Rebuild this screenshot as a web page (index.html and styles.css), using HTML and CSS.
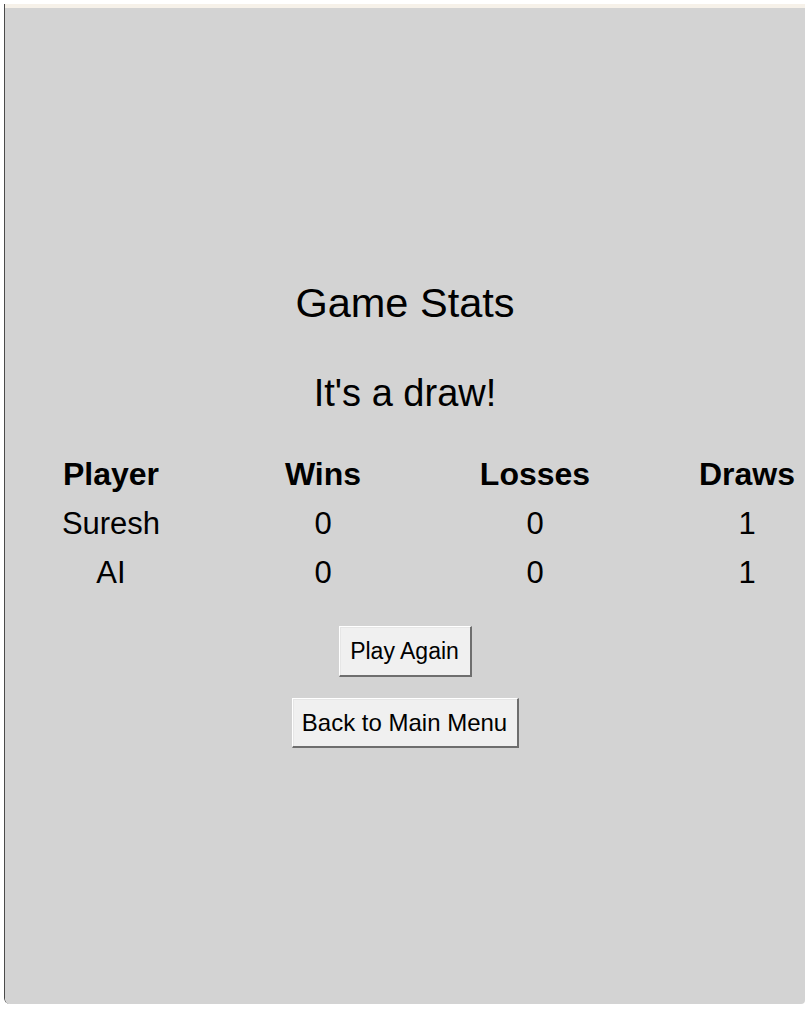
FILE: index.html
```html
<!DOCTYPE html>
<html>
<head>
<meta charset="utf-8">
<title>Game Stats</title>
<link rel="stylesheet" href="styles.css">
</head>
<body>
<div class="window">
  <div class="titlestrip"></div>
  <div class="panel">
    <h1 class="title">Game Stats</h1>
    <p class="result">It's a draw!</p>
    <div class="stats">
      <div class="cell head">Player</div>
      <div class="cell head">Wins</div>
      <div class="cell head">Losses</div>
      <div class="cell head">Draws</div>
      <div class="cell">Suresh</div>
      <div class="cell">0</div>
      <div class="cell">0</div>
      <div class="cell">1</div>
      <div class="cell">AI</div>
      <div class="cell">0</div>
      <div class="cell">0</div>
      <div class="cell">1</div>
    </div>
    <div class="buttons">
      <button class="btn btn-play">Play Again</button>
      <button class="btn btn-menu">Back to Main Menu</button>
    </div>
  </div>
</div>
</body>
</html>
```
FILE: styles.css
```css
html, body {
  margin: 0;
  padding: 0;
  background: #ffffff;
}
body {
  font-family: "Liberation Sans", Arial, sans-serif;
  color: #000;
}
.window {
  margin: 4px 0 0 4px;
  width: 801px;
  height: 1000px;
  display: flex;
  flex-direction: column;
  border-left: 1px solid #4a4a4a;
  border-bottom-left-radius: 6px;
  border-bottom-right-radius: 4px;
  overflow: hidden;
  box-sizing: border-box;
}
.titlestrip {
  height: 4px;
  background: #f6f1e9;
  flex: none;
}
.panel {
  flex: 1;
  background: #d3d3d3;
  display: flex;
  flex-direction: column;
  align-items: center;
  overflow: hidden;
}
.title {
  margin: 275px 0 0 0;
  font-weight: normal;
  font-size: 41.5px;
  line-height: 40px;
  height: 40px;
}
.result {
  margin: 50px 0 0 0;
  font-size: 38px;
  line-height: 40px;
  height: 40px;
}
.stats {
  align-self: flex-start;
  margin-top: 37px;
  display: grid;
  grid-template-columns: repeat(4, 212px);
  grid-auto-rows: 49px;
  width: 848px;
}
.cell {
  text-align: center;
  font-size: 31px;
  line-height: 49px;
  white-space: nowrap;
}
.cell.head {
  font-weight: bold;
  font-size: 32px;
}
.buttons {
  margin-top: 29px;
  display: flex;
  flex-direction: column;
  align-items: center;
  gap: 21px;
}
.btn {
  font-family: "Liberation Sans", Arial, sans-serif;
  font-size: 23px;
  color: #000;
  background: #f0f0f0;
  border-style: solid;
  border-width: 1px 2px 2px 1px;
  border-color: #ffffff #6e6e6e #6e6e6e #ffffff;
  box-shadow: inset 1px 1px 0 #e6e6e6;
  padding: 0;
  margin: 0;
  height: 51px;
}
.btn-play {
  width: 133px;
}
.btn-menu {
  width: 227px;
  height: 50px;
  font-size: 24px;
}
```
